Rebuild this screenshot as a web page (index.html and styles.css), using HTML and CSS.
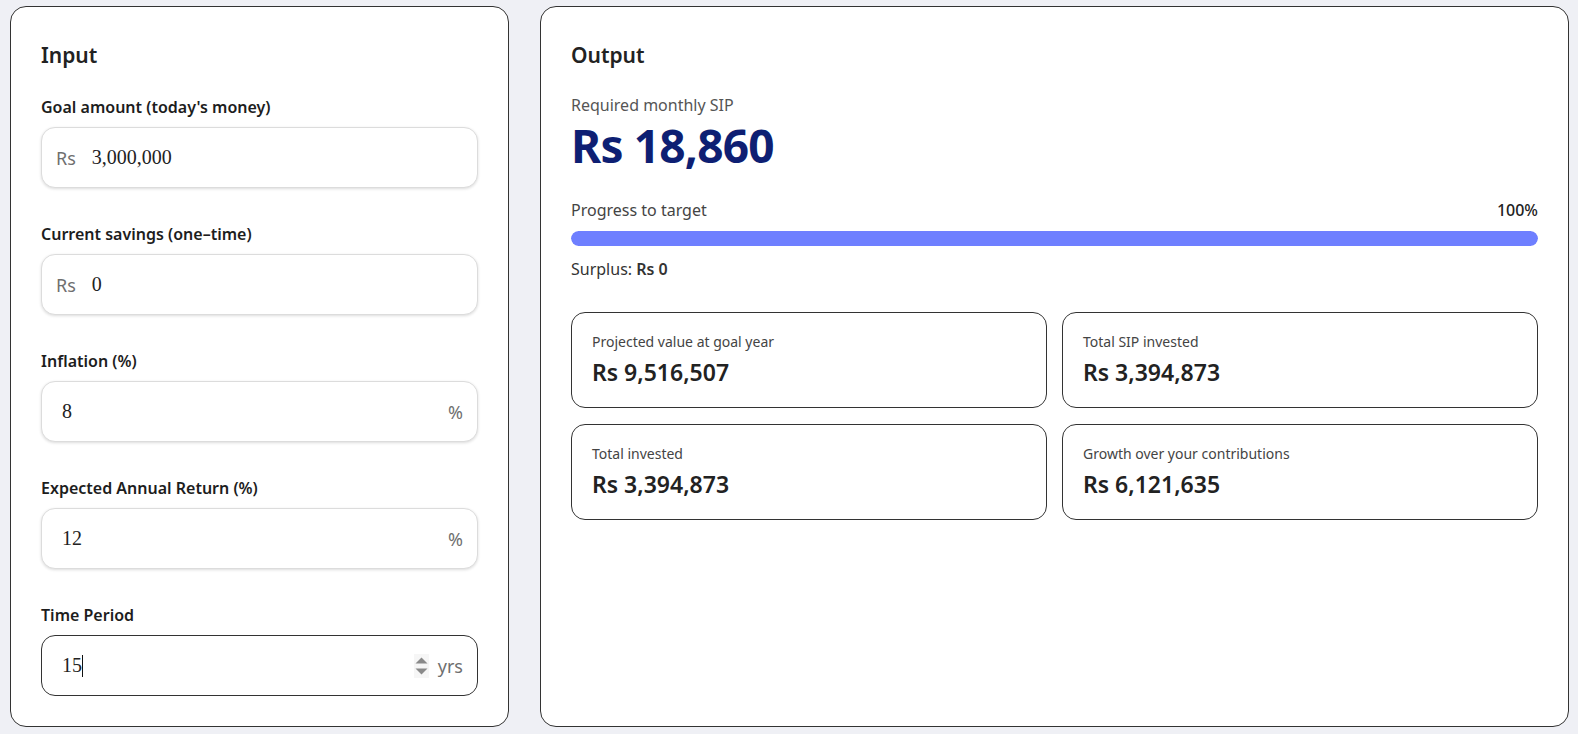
FILE: index.html
```html
<!DOCTYPE html>
<html lang="en">
<head>
<meta charset="utf-8">
<title>SIP Goal Calculator</title>
<link rel="stylesheet" href="styles.css">
</head>
<body>
<main class="layout">
  <section class="card input-card">
    <h2 class="card-title">Input</h2>
    <div class="field">
      <label class="field-label">Goal amount (today's money)</label>
      <div class="input-box">
        <span class="affix prefix">Rs</span>
        <span class="input-value">3,000,000</span>
      </div>
    </div>
    <div class="field">
      <label class="field-label">Current savings (one–time)</label>
      <div class="input-box">
        <span class="affix prefix">Rs</span>
        <span class="input-value">0</span>
      </div>
    </div>
    <div class="field">
      <label class="field-label">Inflation (%)</label>
      <div class="input-box">
        <span class="input-value">8</span>
        <span class="affix suffix">%</span>
      </div>
    </div>
    <div class="field">
      <label class="field-label">Expected Annual Return (%)</label>
      <div class="input-box">
        <span class="input-value">12</span>
        <span class="affix suffix">%</span>
      </div>
    </div>
    <div class="field">
      <label class="field-label">Time Period</label>
      <div class="input-box focused">
        <span class="input-value">15<span class="caret"></span></span>
        <span class="spinner">
          <svg width="15" height="24" viewBox="0 0 15 24"><path d="M1.5 9.5 L7.5 3.5 L13.5 9.5 Z" fill="#8a8a8a"/><path d="M1.5 14.5 L7.5 20.5 L13.5 14.5 Z" fill="#8a8a8a"/></svg>
        </span>
        <span class="affix suffix">yrs</span>
      </div>
    </div>
  </section>

  <section class="card output-card">
    <h2 class="card-title">Output</h2>
    <div class="sip-label">Required monthly SIP</div>
    <div class="sip-value">Rs 18,860</div>
    <div class="progress-head">
      <span>Progress to target</span>
      <span class="progress-pct">100%</span>
    </div>
    <div class="progress-track"><div class="progress-fill" style="width:100%"></div></div>
    <div class="surplus">Surplus: <strong>Rs 0</strong></div>
    <div class="stats">
      <div class="stat">
        <div class="stat-label">Projected value at goal year</div>
        <div class="stat-value">Rs 9,516,507</div>
      </div>
      <div class="stat">
        <div class="stat-label">Total SIP invested</div>
        <div class="stat-value">Rs 3,394,873</div>
      </div>
      <div class="stat">
        <div class="stat-label">Total invested</div>
        <div class="stat-value">Rs 3,394,873</div>
      </div>
      <div class="stat">
        <div class="stat-label">Growth over your contributions</div>
        <div class="stat-value">Rs 6,121,635</div>
      </div>
    </div>
  </section>
</main>
</body>
</html>
```
FILE: styles.css
```css
* { box-sizing: border-box; }
html, body { height: 100%; }
body {
  margin: 0;
  background: #eff0f5;
  font-family: "Noto Sans", "Open Sans", sans-serif;
  color: #222;
}
.layout {
  display: grid;
  grid-template-columns: 499px 1fr;
  gap: 31px;
  padding: 6px 9px 0 10px;
  height: 727px;
}
.card {
  background: #fff;
  border: 1px solid #333;
  border-radius: 16px;
  padding: 30px;
}
.card-title {
  margin: 0 0 22px;
  font-size: 21px;
  line-height: 36px;
  font-weight: 600;
  color: #222;
}
.field { display: flex; flex-direction: column; }
.field + .field { margin-top: 34px; }
.field-label {
  font-size: 16px;
  line-height: 24px;
  font-weight: 600;
  color: #1d1d1d;
  margin-bottom: 8px;
}
.input-box {
  height: 61px;
  display: flex;
  align-items: center;
  padding: 0 14px;
  border: 1px solid #dcdcdc;
  border-radius: 14px;
  box-shadow: 0 1px 3px rgba(0,0,0,0.14);
  background: #fff;
}
.input-box.focused {
  border-color: #333;
  box-shadow: none;
}
.affix {
  font-size: 18px;
  color: #6f6f6f;
}
.prefix { margin-right: 10px; }
.input-value {
  flex: 1;
  padding: 0 6px;
  font-family: "Liberation Serif", "Times New Roman", serif;
  font-size: 20px;
  color: #222;
  display: flex;
  align-items: center;
}
.caret {
  display: inline-block;
  width: 1px;
  height: 22px;
  background: #111;
}
.spinner {
  width: 15px;
  height: 24px;
  background: #f6f6f6;
  margin-right: 9px;
  display: flex;
}
.output-card { display: flex; flex-direction: column; }
.sip-label {
  font-size: 16px;
  line-height: 24px;
  color: #555;
  margin-top: -2px;
}
.sip-value {
  font-size: 46px;
  line-height: 56px;
  font-weight: 700;
  color: #0e1f73;
  letter-spacing: -0.8px;
}
.progress-head {
  margin-top: 25px;
  display: flex;
  justify-content: space-between;
  font-size: 16px;
  line-height: 24px;
  color: #444;
}
.progress-pct { font-weight: 500; color: #222; }
.progress-track {
  margin-top: 9px;
  height: 15px;
  border-radius: 8px;
  background: #e6e8ff;
  overflow: hidden;
}
.progress-fill {
  height: 100%;
  background: #6e7fff;
  border-radius: 8px;
}
.surplus {
  margin-top: 11px;
  font-size: 16px;
  line-height: 24px;
  color: #333;
}
.surplus strong { font-weight: 600; color: #333; }
.stats {
  margin-top: 31px;
  display: grid;
  grid-template-columns: 1fr 1fr;
  gap: 16px 15px;
}
.stat {
  border: 1px solid #333;
  border-radius: 14px;
  padding: 19px 20px;
}
.stat-label {
  font-size: 14px;
  line-height: 20px;
  color: #444;
}
.stat-value {
  margin-top: 4px;
  font-size: 23px;
  line-height: 32px;
  font-weight: 600;
  color: #222;
}
```
